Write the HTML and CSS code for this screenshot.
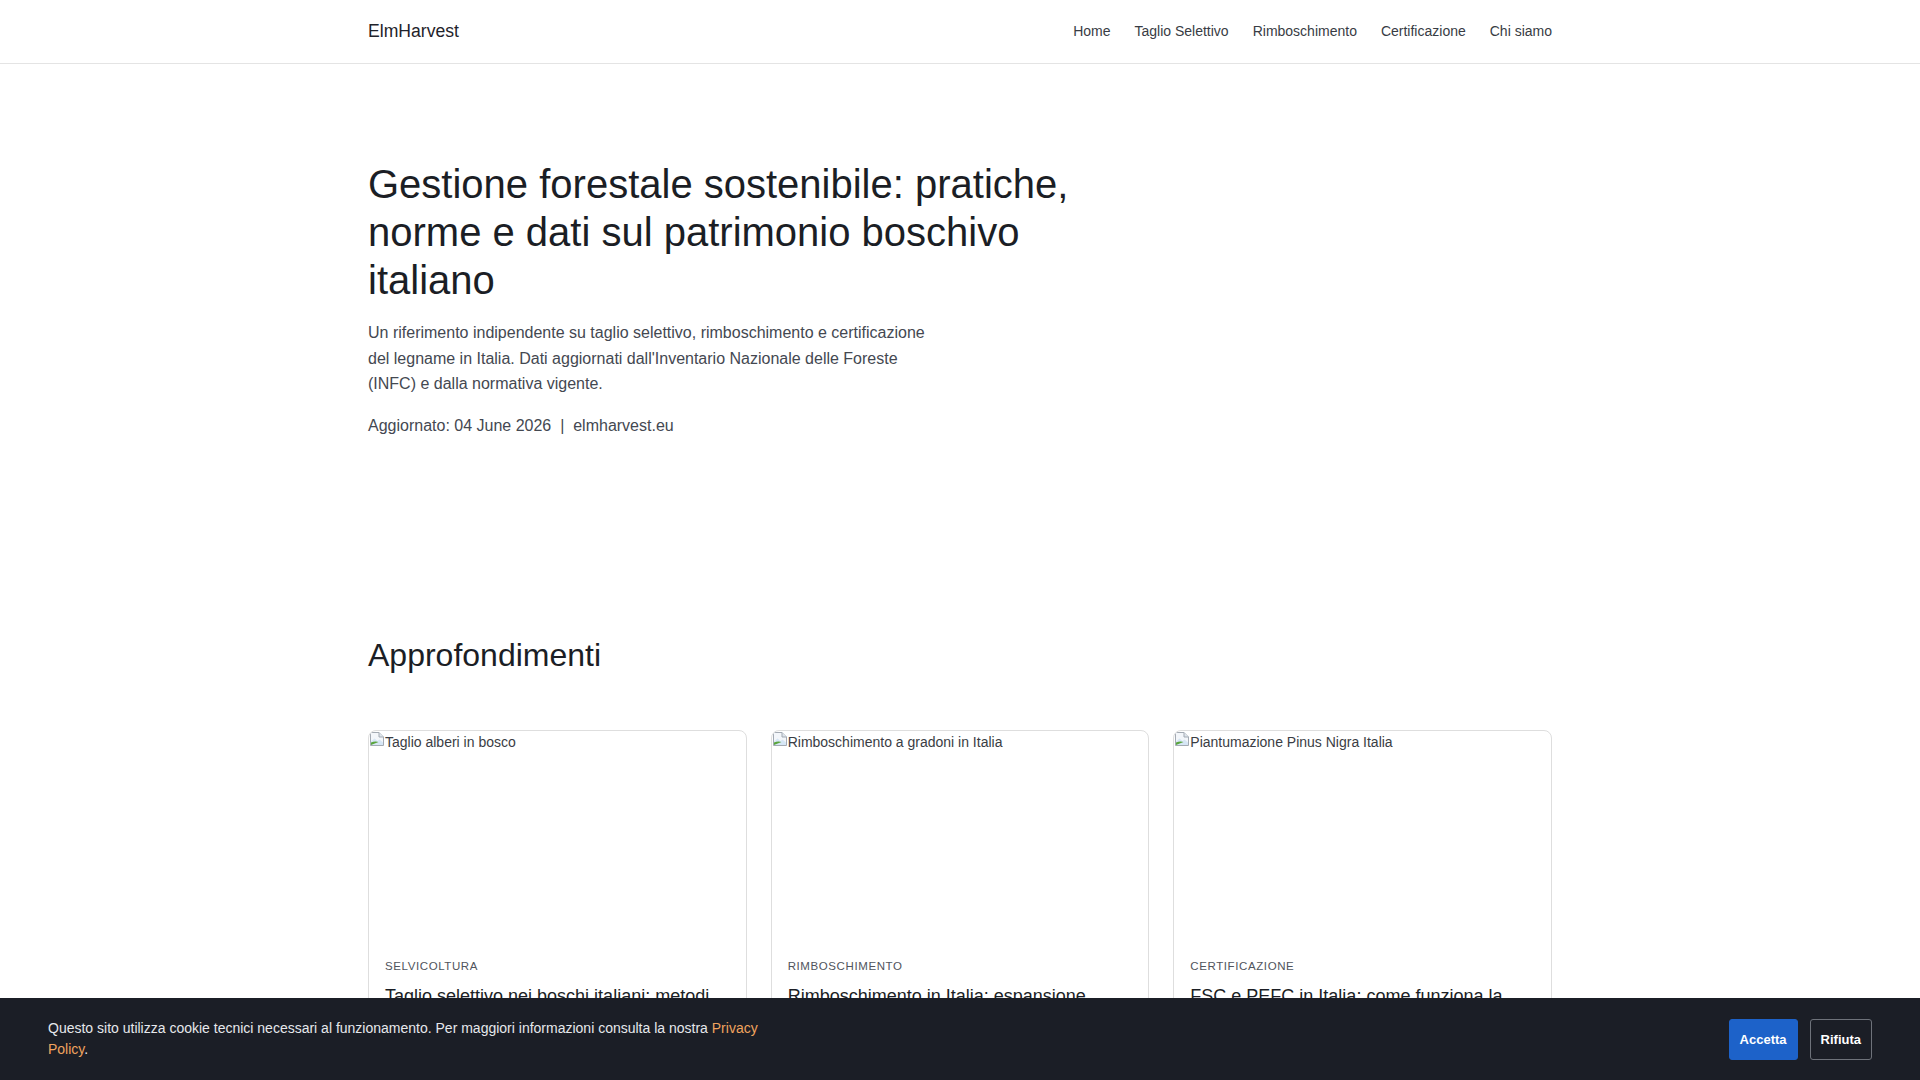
FILE: index.html
```html
<!DOCTYPE html>
<html lang="it">
<head>
<meta charset="utf-8">
<title>ElmHarvest – Gestione forestale sostenibile</title>
<link rel="stylesheet" href="styles.css">
</head>
<body>
<header class="site-header">
  <div class="container nav-inner">
    <a class="brand" href="#">ElmHarvest</a>
    <nav class="nav-links">
      <a href="#">Home</a>
      <a href="#">Taglio Selettivo</a>
      <a href="#">Rimboschimento</a>
      <a href="#">Certificazione</a>
      <a href="#">Chi siamo</a>
    </nav>
  </div>
</header>

<main>
  <section class="hero">
    <div class="container">
      <h1 class="hero-title">Gestione forestale sostenibile: pratiche, norme e dati sul patrimonio boschivo italiano</h1>
      <p class="hero-lead">Un riferimento indipendente su taglio selettivo, rimboschimento e certificazione del legname in Italia. Dati aggiornati dall'Inventario Nazionale delle Foreste (INFC) e dalla normativa vigente.</p>
      <p class="hero-meta">Aggiornato: 04 June 2026 &nbsp;|&nbsp; elmharvest.eu</p>
    </div>
  </section>

  <section class="articles">
    <div class="container">
      <h2 class="section-title">Approfondimenti</h2>
      <div class="card-grid">
        <article class="card">
          <div class="card-media">
            <svg class="broken-icon" width="16" height="16" viewBox="0 0 16 16" aria-hidden="true">
              <path d="M1.5 1.5h8.5l4.5 4.5v8.5h-13z" fill="#f3f6fa" stroke="#a3aab3"/>
              <path d="M10 1.5v4.5h4.5" fill="#dfe5ec" stroke="#a3aab3"/>
              <path d="M2 14V10.5l3.5-3 3 2.5 2-1.5 3.5 3v2.5z" fill="#d6e6f5"/>
              <path d="M2 14v-2.5c2.5-1 5-1.5 7.5-0.5L2 14z" fill="#5aa53c"/>
            </svg>
            <span class="alt-text">Taglio alberi in bosco</span>
          </div>
          <div class="card-body">
            <p class="card-label">Selvicoltura</p>
            <h3 class="card-title">Taglio selettivo nei boschi italiani: metodi tradizionali e gestione sostenibile</h3>
            <p class="card-text">Tecniche di diradamento, turni di utilizzazione e criteri di scelta delle piante.</p>
          </div>
        </article>

        <article class="card">
          <div class="card-media">
            <svg class="broken-icon" width="16" height="16" viewBox="0 0 16 16" aria-hidden="true">
              <path d="M1.5 1.5h8.5l4.5 4.5v8.5h-13z" fill="#f3f6fa" stroke="#a3aab3"/>
              <path d="M10 1.5v4.5h4.5" fill="#dfe5ec" stroke="#a3aab3"/>
              <path d="M2 14V10.5l3.5-3 3 2.5 2-1.5 3.5 3v2.5z" fill="#d6e6f5"/>
              <path d="M2 14v-2.5c2.5-1 5-1.5 7.5-0.5L2 14z" fill="#5aa53c"/>
            </svg>
            <span class="alt-text">Rimboschimento a gradoni in Italia</span>
          </div>
          <div class="card-body">
            <p class="card-label">Rimboschimento</p>
            <h3 class="card-title">Rimboschimento in Italia: espansione spontanea e impianti artificiali</h3>
            <p class="card-text">Specie impiegate, densità d'impianto e risultati nelle diverse regioni.</p>
          </div>
        </article>

        <article class="card">
          <div class="card-media">
            <svg class="broken-icon" width="16" height="16" viewBox="0 0 16 16" aria-hidden="true">
              <path d="M1.5 1.5h8.5l4.5 4.5v8.5h-13z" fill="#f3f6fa" stroke="#a3aab3"/>
              <path d="M10 1.5v4.5h4.5" fill="#dfe5ec" stroke="#a3aab3"/>
              <path d="M2 14V10.5l3.5-3 3 2.5 2-1.5 3.5 3v2.5z" fill="#d6e6f5"/>
              <path d="M2 14v-2.5c2.5-1 5-1.5 7.5-0.5L2 14z" fill="#5aa53c"/>
            </svg>
            <span class="alt-text">Piantumazione Pinus Nigra Italia</span>
          </div>
          <div class="card-body">
            <p class="card-label">Certificazione</p>
            <h3 class="card-title">FSC e PEFC in Italia: come funziona la certificazione forestale</h3>
            <p class="card-text">Requisiti, costi e vantaggi per proprietari e imprese boschive.</p>
          </div>
        </article>
      </div>
    </div>
  </section>
</main>

<div class="cookie-banner">
  <p class="cookie-text">Questo sito utilizza cookie tecnici necessari al funzionamento. Per maggiori informazioni consulta la nostra <a href="#">Privacy Policy</a>.</p>
  <div class="cookie-actions">
    <button class="btn btn-accept" type="button">Accetta</button>
    <button class="btn btn-reject" type="button">Rifiuta</button>
  </div>
</div>
</body>
</html>
```

FILE: styles.css
```css
* {
  box-sizing: border-box;
}

body {
  margin: 0;
  font-family: "Liberation Sans", Arial, Helvetica, sans-serif;
  font-size: 16px;
  line-height: 1.6;
  color: #333;
  background: #fff;
}

a {
  color: inherit;
  text-decoration: none;
}

.container {
  max-width: 1232px;
  margin: 0 auto;
  padding: 0 24px;
}

/* Header */
.site-header {
  border-bottom: 1px solid #e4e4e4;
}

.nav-inner {
  height: 63px;
  display: flex;
  align-items: center;
  justify-content: space-between;
}

.brand {
  font-size: 17.6px;
  color: #1f232b;
}

.nav-links {
  display: flex;
  gap: 24px;
}

.nav-links a {
  font-size: 14px;
  color: #383c44;
}

/* Hero */
.hero {
  padding: 96px 0;
}

.hero-title {
  margin: 0 0 16px;
  max-width: 720px;
  font-size: 40px;
  line-height: 1.2;
  font-weight: 400;
  color: #1b1e25;
}

.hero-lead {
  margin: 0 0 16px;
  max-width: 560px;
  color: #444851;
}

.hero-meta {
  margin: 0;
  color: #444851;
}

/* Articles */
.articles {
  padding: 101px 0 96px;
}

.section-title {
  margin: 0 0 55px;
  font-size: 32px;
  line-height: 1.25;
  font-weight: 400;
  color: #1b1e25;
}

.card-grid {
  display: grid;
  grid-template-columns: repeat(3, 1fr);
  gap: 24px;
}

.card {
  border: 1px solid #dedede;
  border-radius: 8px;
  overflow: hidden;
  background: #fff;
}

.card-media {
  height: 211px;
  display: flex;
  align-items: flex-start;
  font-size: 14px;
  color: #3a3d44;
}

.broken-icon {
  flex: none;
  display: block;
}

.card-body {
  padding: 16px;
}

.card-label {
  margin: 0 0 8px;
  font-size: 11.5px;
  line-height: 1.5;
  letter-spacing: 0.6px;
  text-transform: uppercase;
  color: #50545c;
}

.card-title {
  margin: 0 0 8px;
  font-size: 18px;
  line-height: 1.4;
  font-weight: 400;
  color: #1b1e25;
}

.card-text {
  margin: 0;
  font-size: 14px;
  color: #555;
}

/* Cookie banner */
.cookie-banner {
  position: fixed;
  left: 0;
  right: 0;
  bottom: 0;
  display: flex;
  align-items: center;
  justify-content: space-between;
  gap: 24px;
  padding: 20px 48px;
  background: #1b1e26;
  color: #e6e8ec;
}

.cookie-text {
  margin: 0;
  max-width: 720px;
  font-size: 14px;
  line-height: 1.5;
}

.cookie-text a {
  color: #f0a35e;
}

.cookie-actions {
  display: flex;
  gap: 12px;
}

.btn {
  font-family: inherit;
  font-size: 13px;
  font-weight: 700;
  line-height: 19px;
  padding: 10px;
  border-radius: 3px;
  color: #fff;
  cursor: pointer;
}

.btn-accept {
  background: #1d62c9;
  border: 1px solid #1d62c9;
}

.btn-reject {
  background: transparent;
  border: 1px solid #6e727a;
}
```
